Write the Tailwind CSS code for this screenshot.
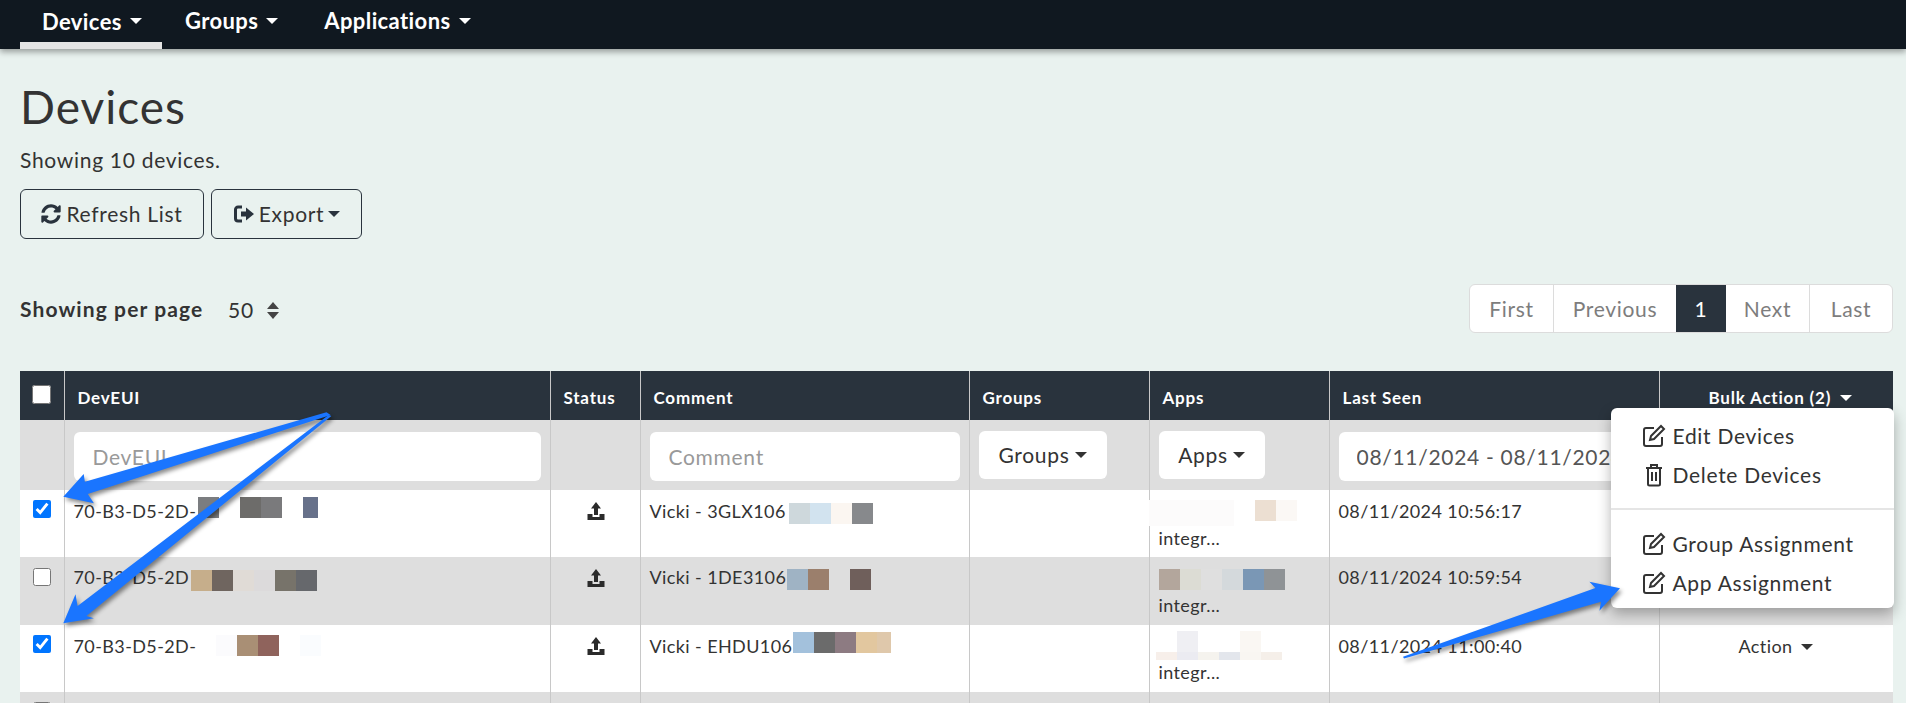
<!DOCTYPE html>
<html lang="en">
<head>
  <meta charset="UTF-8">
  <script src="https://cdn.jsdelivr.net/npm/@tailwindcss/browser@4"></script>
  <title>Devices</title>
</head>
<body class="relative h-[703px] overflow-hidden bg-[#e9f2ef] font-['Lato',sans-serif] text-[#333]">

  <!-- Nav -->
  <nav class="flex h-[49px] items-stretch bg-[#101820] pl-5 text-[22px] font-bold tracking-[0.4px] text-white shadow-[0_3px_6px_rgba(0,0,0,0.35)]">
    <a class="flex w-[142px] items-center gap-2 border-b-[7px] border-[#e4e4e4] pl-[22px]">Devices <span class="h-0 w-0 border-x-[6px] border-t-[6px] border-x-transparent border-t-white"></span></a>
    <a class="flex items-center gap-2 pl-[23px] pb-[8px]">Groups <span class="h-0 w-0 border-x-[6px] border-t-[6px] border-x-transparent border-t-white"></span></a>
    <a class="flex items-center gap-2 pl-[46px] pb-[8px]">Applications <span class="h-0 w-0 border-x-[6px] border-t-[6px] border-x-transparent border-t-white"></span></a>
  </nav>

  <main class="pl-5 pr-[13px]">
    <h1 class="mt-[32px] h-[52px] text-[46px] leading-[52px] font-normal tracking-[1px]">Devices</h1>
    <p class="mt-[15px] h-6 text-[21px] leading-6 tracking-[0.7px]">Showing 10 devices.</p>

    <!-- Buttons -->
    <div class="mt-[17px] flex gap-[7px] text-[21px] tracking-[0.7px]">
      <button class="flex h-[50px] w-[184px] items-center justify-center gap-[5px] rounded-md border border-[#29333d]">
        <svg class="size-5" viewBox="0 0 512 512" fill="#29333d"><path d="M370.72 133.28C339.458 104.008 298.888 87.962 255.848 88c-77.458.068-144.328 53.178-162.791 126.85-1.344 5.363-6.122 9.15-11.651 9.15H24.103c-7.498 0-13.194-6.807-11.807-14.176C33.933 94.924 134.813 8 256 8c66.448 0 126.791 26.136 171.315 68.685L463.03 40.97C478.149 25.851 504 36.559 504 57.941V192c0 13.255-10.745 24-24 24H345.941c-21.382 0-32.09-25.851-16.971-40.971l41.75-41.749zM32 296h134.059c21.382 0 32.09 25.851 16.971 40.971l-41.75 41.75c31.262 29.273 71.835 45.319 114.876 45.28 77.418-.07 144.315-53.144 162.787-126.849 1.344-5.363 6.122-9.15 11.651-9.15h57.304c7.498 0 13.194 6.807 11.807 14.176C478.067 417.076 377.187 504 256 504c-66.448 0-126.791-26.136-171.315-68.685L48.97 471.03C33.851 486.149 8 475.441 8 454.059V320c0-13.255 10.745-24 24-24z"/></svg>
        Refresh List
      </button>
      <button class="flex h-[50px] w-[151px] items-center justify-center gap-[4px] rounded-md border border-[#29333d]">
        <svg class="h-5 w-[22px]" viewBox="0 0 22 20" fill="#29333d"><path d="M9 3H5a2.500 2.500 0 0 0-2.500 2.500v9A2.500 2.500 0 0 0 5 17h4" fill="none" stroke="#29333d" stroke-width="3"/><path d="M8 7.500h5V3.500L21 10l-8 6.500v-4H8z"/></svg>
        Export
        <span class="h-0 w-0 border-x-[6px] border-t-[6px] border-x-transparent border-t-[#29333d]"></span>
      </button>
    </div>

    <!-- Per page + pagination -->
    <div class="mt-[45px] flex h-[49px] items-center justify-between">
      <div class="flex items-center text-[21px]">
        <span class="w-[208px] font-bold tracking-[1.1px]">Showing per page</span>
        <span class="w-[39px] pt-[3px] tracking-[0.7px]">50</span>
        <span class="flex flex-col gap-[3px] pt-[3px]">
          <span class="h-0 w-0 border-x-[6px] border-b-[7px] border-x-transparent border-b-[#444]"></span>
          <span class="h-0 w-0 border-x-[6px] border-t-[7px] border-x-transparent border-t-[#444]"></span>
        </span>
      </div>
      <div class="flex h-[49px] overflow-hidden rounded-md border border-[#dcdcdc] bg-white text-[21px] tracking-[0.7px] text-[#7d7d7d]">
        <a class="flex w-[84px] items-center justify-center border-r border-[#dcdcdc]">First</a>
        <a class="flex w-[122px] items-center justify-center">Previous</a>
        <a class="flex w-[50px] items-center justify-center bg-[#29333d] text-white">1</a>
        <a class="flex w-[84px] items-center justify-center border-r border-[#dcdcdc]">Next</a>
        <a class="flex w-[82px] items-center justify-center">Last</a>
      </div>
    </div>

    <!-- Table -->
    <table class="mt-[38px] w-[1873px] table-fixed border-collapse text-[18px] tracking-[0.4px]">
      <colgroup>
        <col class="w-[44px]"><col class="w-[486px]"><col class="w-[90px]"><col class="w-[329px]"><col class="w-[180px]"><col class="w-[180px]"><col class="w-[330px]"><col class="w-[234px]">
      </colgroup>
      <thead>
        <tr class="h-[49px] bg-[#29333d] text-left text-[17px] font-bold tracking-[0.8px] text-white">
          <th class="border-r border-[#c8c8c8] pb-[5px] text-center align-middle"><input type="checkbox" class="h-[19px] w-[19px] align-middle"></th>
          <th class="border-r border-[#c8c8c8] pl-[13px] pt-[4px]">DevEUI</th>
          <th class="border-r border-[#c8c8c8] pl-[13px] pt-[4px]">Status</th>
          <th class="border-r border-[#c8c8c8] pl-[13px] pt-[4px]">Comment</th>
          <th class="border-r border-[#c8c8c8] pl-[13px] pt-[4px]">Groups</th>
          <th class="border-r border-[#c8c8c8] pl-[13px] pt-[4px]">Apps</th>
          <th class="border-r border-[#c8c8c8] pl-[13px] pt-[4px]">Last Seen</th>
          <th class="relative pt-[4px] pl-[49px] text-left">
            <span class="inline-flex items-center gap-[9px]">Bulk Action (2) <span class="h-0 w-0 border-x-[6px] border-t-[6px] border-x-transparent border-t-white"></span></span>
            <!-- Bulk menu -->
            <div class="absolute left-[-49px] top-[37px] z-10 h-[200px] w-[283px] rounded-md bg-white text-[21px] font-normal tracking-[0.7px] text-[#333] shadow-[0_6px_14px_rgba(0,0,0,0.3)]">
              <ul class="flex h-[100px] flex-col gap-[15px] pl-[31px] pt-[16px]">
                <li class="flex h-6 items-center gap-[7px]">
                  <svg class="size-6" viewBox="0 0 24 24" fill="none" stroke="#333" stroke-width="2"><path d="M12 4H4a2 2 0 0 0-2 2v14a2 2 0 0 0 2 2h14a2 2 0 0 0 2-2v-7"/><path d="M9 12 19 2l3 3-10 10-4 1z"/></svg>
                  Edit Devices
                </li>
                <li class="flex h-6 items-center gap-[7px]">
                  <svg class="size-6" viewBox="0 0 24 24" fill="none" stroke="#333" stroke-width="2"><path d="M4 5h16M9 5V2h6v3M6 5v16a1.500 1.500 0 0 0 1.500 1.500h9A1.500 1.500 0 0 0 18 21V5M10 9v9M14 9v9"/></svg>
                  Delete Devices
                </li>
              </ul>
              <div class="h-[2px] bg-[#e5e5e5]"></div>
              <ul class="flex flex-col gap-[15px] pl-[31px] pt-[22px]">
                <li class="flex h-6 items-center gap-[7px]">
                  <svg class="size-6" viewBox="0 0 24 24" fill="none" stroke="#333" stroke-width="2"><path d="M12 4H4a2 2 0 0 0-2 2v14a2 2 0 0 0 2 2h14a2 2 0 0 0 2-2v-7"/><path d="M9 12 19 2l3 3-10 10-4 1z"/></svg>
                  Group Assignment
                </li>
                <li class="flex h-6 items-center gap-[7px]">
                  <svg class="size-6" viewBox="0 0 24 24" fill="none" stroke="#333" stroke-width="2"><path d="M12 4H4a2 2 0 0 0-2 2v14a2 2 0 0 0 2 2h14a2 2 0 0 0 2-2v-7"/><path d="M9 12 19 2l3 3-10 10-4 1z"/></svg>
                  App Assignment
                </li>
              </ul>
            </div>
          </th>
        </tr>
      </thead>
      <tbody>
        <!-- Filters -->
        <tr class="h-[70px] bg-[#dedede] text-[21px] tracking-[0.7px]">
          <td class="border-r border-[#c8c8c8]"></td>
          <td class="border-r border-[#c8c8c8] px-[9px] pt-[2px]"><input placeholder="DevEUI" class="h-[49px] w-full rounded-md bg-white px-[19px] placeholder:text-[#999]"></td>
          <td class="border-r border-[#c8c8c8]"></td>
          <td class="border-r border-[#c8c8c8] px-[9px] pt-[2px]"><input placeholder="Comment" class="h-[49px] w-full rounded-md bg-white px-[19px] placeholder:text-[#999]"></td>
          <td class="border-r border-[#c8c8c8] pl-[9px]"><button class="flex h-[48px] w-[128px] items-center justify-center gap-[5px] rounded-md bg-white">Groups <span class="h-0 w-0 border-x-[6px] border-t-[6px] border-x-transparent border-t-[#333]"></span></button></td>
          <td class="border-r border-[#c8c8c8] pl-[9px]"><button class="flex h-[48px] w-[106px] items-center justify-center gap-[5px] rounded-md bg-white">Apps <span class="h-0 w-0 border-x-[6px] border-t-[6px] border-x-transparent border-t-[#333]"></span></button></td>
          <td class="border-r border-[#c8c8c8] px-[9px] pt-[2px]"><input value="08/11/2024 - 08/11/2024" class="h-[49px] w-full rounded-md bg-white px-[18px] text-[#555]"></td>
          <td></td>
        </tr>

        <!-- Row 1 -->
        <tr class="h-[67px] bg-white align-top">
          <td class="border-r border-[#c8c8c8] pt-[8px] text-center"><input type="checkbox" checked class="h-[18px] w-[18px]"></td>
          <td class="border-r border-[#c8c8c8] pl-[9px] pt-[8px]">
            <div class="flex items-start"><span class="w-[124px] whitespace-nowrap">70-B3-D5-2D-</span><span class="-mt-px flex"><i class="h-[21px] w-[21px] bg-[#7b7d80]"></i><i class="h-[21px] w-[21px]"></i><i class="h-[21px] w-[21px] bg-[#6d6c6a]"></i><i class="h-[21px] w-[21px] bg-[#7a7a7c]"></i><i class="h-[21px] w-[21px]"></i><i class="h-[21px] w-[15px] bg-[#67718a]"></i></span></div>
          </td>
          <td class="border-r border-[#c8c8c8] pt-[11px]"><div class="ml-[35px]">
            <svg class="h-5 w-5" viewBox="0 0 20 20" fill="#2b2b2b"><path d="M10 1 15 7.500H12V14H8V7.500H5zM1.500 13H6.500v3h7v-3h5v6H1.500z"/></svg></div></td>
          <td class="border-r border-[#c8c8c8] pl-[9px] pt-[8px]">
            <div class="flex items-start"><span class="w-[139px] whitespace-nowrap">Vicki - 3GLX106</span><span class="flex pt-[5px]"><i class="h-[21px] w-[21px] bg-[#ced8dc]"></i><i class="h-[21px] w-[21px] bg-[#d2e3ef]"></i><i class="h-[21px] w-[21px] bg-[#fbf6f1]"></i><i class="h-[21px] w-[21px] bg-[#87898c]"></i></span></div>
          </td>
          <td class="border-r border-[#c8c8c8]"></td>
          <td class="border-r border-[#c8c8c8] pt-[10px]">
            <div class="-ml-px flex h-[26px]"><i class="h-[26px] w-[85px] bg-[#fcfbfb]"></i><i class="w-[21px]"></i><i class="h-[21px] w-[21px] bg-[#ecdfd2]"></i><i class="h-[21px] w-[21px] bg-[#fbf8f5]"></i></div>
            <div class="pl-[9px] leading-6">integr...</div>
          </td>
          <td class="border-r border-[#c8c8c8] pl-[9px] pt-[8px]">08/11/2024 10:56:17</td>
          <td></td>
        </tr>

        <!-- Row 2 -->
        <tr class="h-[68px] bg-[#dedede] align-top">
          <td class="border-r border-[#c8c8c8] pt-[9px] text-center"><input type="checkbox" class="h-[18px] w-[18px]"></td>
          <td class="border-r border-[#c8c8c8] pl-[9px] pt-[7px]">
            <div class="flex items-start"><span class="w-[117px] whitespace-nowrap">70-B3-D5-2D</span><span class="flex pt-[6px]"><i class="h-[21px] w-[21px] bg-[#c6ae8b]"></i><i class="h-[21px] w-[21px] bg-[#6f655f]"></i><i class="h-[21px] w-[21px] bg-[#e0dbd6]"></i><i class="h-[21px] w-[21px] bg-[#dcdadb]"></i><i class="h-[21px] w-[21px] bg-[#77736a]"></i><i class="h-[21px] w-[21px] bg-[#66686c]"></i></span></div>
          </td>
          <td class="border-r border-[#c8c8c8] pt-[11px]"><div class="ml-[35px]">
            <svg class="h-5 w-5" viewBox="0 0 20 20" fill="#2b2b2b"><path d="M10 1 15 7.500H12V14H8V7.500H5zM1.500 13H6.500v3h7v-3h5v6H1.500z"/></svg></div></td>
          <td class="border-r border-[#c8c8c8] pl-[9px] pt-[7px]">
            <div class="flex items-start"><span class="w-[137px] whitespace-nowrap">Vicki - 1DE3106</span><span class="flex pt-[5px]"><i class="h-[21px] w-[21px] bg-[#9fb3c4]"></i><i class="h-[21px] w-[21px] bg-[#9b7f6c]"></i><i class="h-[21px] w-[21px]"></i><i class="h-[21px] w-[21px] bg-[#6f5f5b]"></i></span></div>
          </td>
          <td class="border-r border-[#c8c8c8]"></td>
          <td class="border-r border-[#c8c8c8] pl-[9px] pt-[12px]">
            <div class="flex h-[24px]"><i class="h-[21px] w-[21px] bg-[#b3a69c]"></i><i class="h-[21px] w-[21px] bg-[#dcdcd4]"></i><i class="h-[21px] w-[21px] bg-[#dfdfdf]"></i><i class="h-[21px] w-[21px] bg-[#d4d9dc]"></i><i class="h-[21px] w-[21px] bg-[#7a97b5]"></i><i class="h-[21px] w-[21px] bg-[#8f9396]"></i></div>
            <div class="leading-6">integr...</div>
          </td>
          <td class="border-r border-[#c8c8c8] pl-[9px] pt-[7px]">08/11/2024 10:59:54</td>
          <td></td>
        </tr>

        <!-- Row 3 -->
        <tr class="h-[67px] bg-white align-top">
          <td class="border-r border-[#c8c8c8] pt-[8px] text-center"><input type="checkbox" checked class="h-[18px] w-[18px]"></td>
          <td class="border-r border-[#c8c8c8] pl-[9px] pt-[8px]">
            <div class="flex items-start"><span class="w-[142px] whitespace-nowrap">70-B3-D5-2D-</span><span class="flex pt-[2px]"><i class="h-[21px] w-[21px] bg-[#fbfbfd]"></i><i class="h-[21px] w-[21px] bg-[#a98f75]"></i><i class="h-[21px] w-[21px] bg-[#8f635c]"></i><i class="h-[21px] w-[21px]"></i><i class="h-[21px] w-[21px] bg-[#fafcfe]"></i></span></div>
          </td>
          <td class="border-r border-[#c8c8c8] pt-[11px]"><div class="ml-[35px]">
            <svg class="h-5 w-5" viewBox="0 0 20 20" fill="#2b2b2b"><path d="M10 1 15 7.500H12V14H8V7.500H5zM1.500 13H6.500v3h7v-3h5v6H1.500z"/></svg></div></td>
          <td class="border-r border-[#c8c8c8] pl-[9px] pt-[8px]">
            <div class="flex items-start"><span class="w-[143px] whitespace-nowrap">Vicki - EHDU106</span><span class="-mt-px flex"><i class="h-[21px] w-[21px] bg-[#a3c1dc]"></i><i class="h-[21px] w-[21px] bg-[#6b6b6b]"></i><i class="h-[21px] w-[21px] bg-[#8d7b82]"></i><i class="h-[21px] w-[21px] bg-[#e2c79f]"></i><i class="h-[21px] w-[14px] bg-[#dfc8ab]"></i></span></div>
          </td>
          <td class="border-r border-[#c8c8c8]"></td>
          <td class="border-r border-[#c8c8c8] pl-[6px] pt-[6px]">
            <div class="grid h-[29px] grid-cols-[repeat(6,21px)] grid-rows-[21px_8px]">
              <i></i><i class="bg-[#efeff3]"></i><i></i><i></i><i class="bg-[#faf7f3]"></i><i></i>
              <i class="bg-[#f7efea]"></i><i class="bg-[#ebebf1]"></i><i class="bg-[#f5f3ee]"></i><i class="bg-[#e3e6ec]"></i><i class="bg-[#f9f6f2]"></i><i class="bg-[#f5efe9]"></i>
            </div>
            <div class="pl-[3px] leading-6">integr...</div>
          </td>
          <td class="border-r border-[#c8c8c8] pl-[9px] pt-[8px]">08/11/2024 11:00:40</td>
          <td class="pl-[79px] pt-[8px]"><span class="inline-flex items-center gap-[9px]">Action <span class="h-0 w-0 border-x-[6px] border-t-[6px] border-x-transparent border-t-[#333]"></span></span></td>
        </tr>

        <!-- Row 4, cut off by the window -->
        <tr class="h-[67px] bg-[#dedede] align-top">
          <td class="border-r border-[#c8c8c8] pt-[8px] text-center"><input type="checkbox" class="h-[18px] w-[18px]"></td>
          <td class="border-r border-[#c8c8c8]"></td>
          <td class="border-r border-[#c8c8c8]"></td>
          <td class="border-r border-[#c8c8c8]"></td>
          <td class="border-r border-[#c8c8c8]"></td>
          <td class="border-r border-[#c8c8c8]"></td>
          <td class="border-r border-[#c8c8c8]"></td>
          <td></td>
        </tr>
      </tbody>
    </table>
  </main>

  <!-- Annotation arrows drawn over the screenshot -->
  <svg class="pointer-events-none absolute left-0 top-0 z-20 drop-shadow-[2px_3px_2px_rgba(0,0,0,0.45)]" width="1906" height="703" viewBox="0 0 1906 703" fill="#1a75ff">
    <polygon points="326.500,412.300 330.600,415 87.800,494 93.900,503.300 63.300,496.700 83.700,474 84.900,481.700"/>
    <polygon points="328.600,415 331.400,416 86.500,616 93.900,618.300 63.300,623.300 75.500,594.300 77.600,606"/>
    <polygon points="1403,656.700 1595.400,588 1589.400,581.700 1620,588.300 1599.400,610.700 1601,601.700 1404,658.500"/>
  </svg>
</body>
</html>
